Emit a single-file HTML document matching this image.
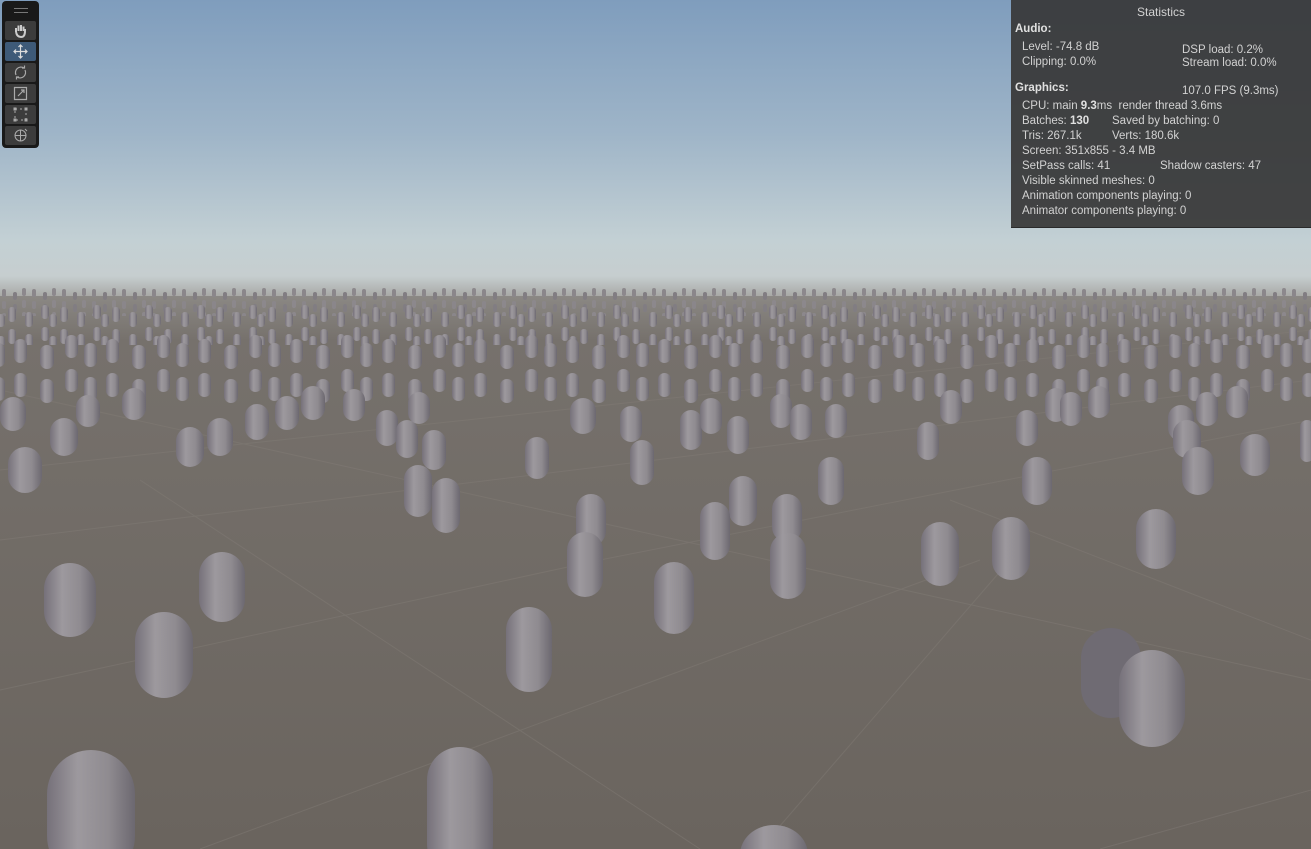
<!DOCTYPE html>
<html><head><meta charset="utf-8"><style>
html,body{margin:0;padding:0;width:1311px;height:849px;overflow:hidden;background:#6e6863}
#scene{position:absolute;left:0;top:0}
#stats{position:absolute;left:1011px;top:0;width:300px;height:227px;background:rgba(56,56,56,0.93);color:#d2d2d2;font-family:"Liberation Sans",sans-serif;font-size:11.5px;border-bottom:1px solid #2a2a2a}
#stats div{position:absolute;white-space:nowrap}
#stats b{font-weight:bold;color:#e0e0e0}
#tools{position:absolute;left:2px;top:1px;width:37px;height:147px;background:#191919;border-radius:4px}
.tb{position:absolute;left:3px;width:31px;height:19px;background:#3c3c3c;border-radius:2px}
.tb svg{position:absolute;left:8px;top:2px}
</style></head><body>
<svg id="scene" width="1311" height="849" xmlns="http://www.w3.org/2000/svg">
<defs>
<linearGradient id="sky" x1="0" y1="0" x2="0" y2="1">
<stop offset="0" stop-color="#7f9dbd"/><stop offset="0.45" stop-color="#9fb5c8"/><stop offset="0.8" stop-color="#c3d0d4"/><stop offset="0.92" stop-color="#c6cecf"/><stop offset="1" stop-color="#a3a29e"/>
</linearGradient>
<linearGradient id="gnd" x1="0" y1="0" x2="0" y2="1">
<stop offset="0" stop-color="#8b8884"/><stop offset="0.08" stop-color="#76716c"/><stop offset="1" stop-color="#6a645e"/>
</linearGradient>
<linearGradient id="cap" x1="0" y1="0" x2="1" y2="0">
<stop offset="0" stop-color="#76717a"/><stop offset="0.35" stop-color="#9d999e"/><stop offset="0.7" stop-color="#8f8b90"/><stop offset="1" stop-color="#6c6870"/>
</linearGradient>
<pattern id="p1" x="0" y="288" width="30" height="12" patternUnits="userSpaceOnUse">
<rect x="2" y="1" width="4" height="8" rx="2" fill="#8a868a"/><rect x="13" y="4" width="4" height="8" rx="2" fill="#817d82"/><rect x="22" y="0" width="4" height="8" rx="2" fill="#8c888c"/>
</pattern>
<pattern id="p2" x="5" y="305" width="52" height="22" patternUnits="userSpaceOnUse">
<rect x="3" y="2" width="8" height="15" rx="4" fill="url(#cap)"/><rect x="20" y="7" width="8" height="15" rx="4" fill="url(#cap)"/><rect x="36" y="0" width="8" height="14" rx="4" fill="url(#cap)"/><rect x="44" y="9" width="8" height="13" rx="4" fill="url(#cap)"/>
</pattern>
<pattern id="p3" x="10" y="335" width="92" height="34" patternUnits="userSpaceOnUse">
<rect x="4" y="4" width="13" height="24" rx="6.5" fill="url(#cap)"/><rect x="30" y="10" width="14" height="24" rx="7" fill="url(#cap)"/><rect x="55" y="0" width="13" height="23" rx="6.5" fill="url(#cap)"/><rect x="74" y="8" width="13" height="24" rx="6.5" fill="url(#cap)"/>
</pattern>
</defs>
<rect width="1311" height="300" fill="url(#sky)"/>
<rect y="296" width="1311" height="553" fill="url(#gnd)"/>
<g stroke="#837d77" stroke-width="1" fill="none" opacity="0.45">
<path d="M0 540 L1311 380"/><path d="M0 690 L600 560 L1311 420"/><path d="M0 470 L700 395 L1311 330"/><path d="M200 849 L980 560"/><path d="M760 849 L1010 560"/><path d="M140 480 L700 849"/><path d="M0 390 L1311 680"/><path d="M950 500 L1311 640"/><path d="M1100 849 L1311 790"/>
</g>
<rect x="0" y="288" width="1311" height="28" fill="url(#p1)"/>
<rect x="0" y="305" width="1311" height="40" fill="url(#p2)"/>
<rect x="0" y="335" width="1311" height="68" fill="url(#p3)"/>
<g fill="url(#cap)">
<rect x="0" y="397" width="26" height="34" rx="13"/><rect x="50" y="418" width="28" height="38" rx="14"/><rect x="76" y="395" width="24" height="32" rx="12"/><rect x="122" y="388" width="24" height="32" rx="12"/><rect x="176" y="427" width="28" height="40" rx="14"/><rect x="207" y="418" width="26" height="38" rx="13"/><rect x="245" y="404" width="24" height="36" rx="12"/><rect x="275" y="396" width="24" height="34" rx="12"/><rect x="301" y="386" width="24" height="34" rx="12"/><rect x="343" y="389" width="22" height="32" rx="11"/><rect x="376" y="410" width="22" height="36" rx="11"/><rect x="396" y="420" width="22" height="38" rx="11"/><rect x="408" y="392" width="22" height="32" rx="11"/>
<rect x="422" y="430" width="24" height="40" rx="12"/><rect x="525" y="437" width="24" height="42" rx="12"/><rect x="570" y="398" width="26" height="36" rx="13"/><rect x="620" y="406" width="22" height="36" rx="11"/><rect x="630" y="440" width="24" height="45" rx="12"/><rect x="680" y="410" width="22" height="40" rx="11"/><rect x="700" y="398" width="22" height="36" rx="11"/><rect x="727" y="416" width="22" height="38" rx="11"/><rect x="770" y="394" width="22" height="34" rx="11"/><rect x="790" y="404" width="22" height="36" rx="11"/><rect x="825" y="404" width="22" height="34" rx="11"/><rect x="818" y="457" width="26" height="48" rx="13"/>
<rect x="917" y="422" width="22" height="38" rx="11"/><rect x="940" y="390" width="22" height="34" rx="11"/><rect x="1016" y="410" width="22" height="36" rx="11"/><rect x="1045" y="388" width="22" height="34" rx="11"/><rect x="1060" y="392" width="22" height="34" rx="11"/><rect x="1088" y="386" width="22" height="32" rx="11"/><rect x="1168" y="405" width="26" height="36" rx="13"/><rect x="1173" y="420" width="28" height="38" rx="14"/><rect x="1196" y="392" width="22" height="34" rx="11"/><rect x="1226" y="386" width="22" height="32" rx="11"/><rect x="1240" y="434" width="30" height="42" rx="15"/><rect x="1300" y="420" width="14" height="42" rx="7"/>
<rect x="8" y="447" width="34" height="46" rx="17"/><rect x="1022" y="457" width="30" height="48" rx="15"/><rect x="1182" y="447" width="32" height="48" rx="16"/>
<rect x="404" y="465" width="28" height="52" rx="14"/><rect x="432" y="478" width="28" height="55" rx="14"/><rect x="576" y="494" width="30" height="52" rx="15"/><rect x="729" y="476" width="28" height="50" rx="14"/><rect x="700" y="502" width="30" height="58" rx="15"/><rect x="772" y="494" width="30" height="48" rx="15"/>
<rect x="567" y="532" width="36" height="65" rx="18"/><rect x="770" y="533" width="36" height="66" rx="18"/><rect x="654" y="562" width="40" height="72" rx="20"/><rect x="921" y="522" width="38" height="64" rx="19"/><rect x="992" y="517" width="38" height="63" rx="19"/><rect x="1136" y="509" width="40" height="60" rx="20"/>
<rect x="44" y="563" width="52" height="74" rx="26"/><rect x="199" y="552" width="46" height="70" rx="23"/><rect x="135" y="612" width="58" height="86" rx="29"/><rect x="506" y="607" width="46" height="85" rx="23"/>
<rect x="1081" y="628" width="60" height="90" rx="30" fill="#6f6b73"/><rect x="1119" y="650" width="66" height="97" rx="33"/>
<rect x="47" y="750" width="88" height="130" rx="44"/><rect x="427" y="747" width="66" height="130" rx="33"/><rect x="740" y="825" width="68" height="60" rx="34"/>
</g>
</svg>
<div id="tools">
<div style="position:absolute;left:12px;top:7px;width:14px;height:1px;background:#777"></div><div style="position:absolute;left:12px;top:11px;width:14px;height:1px;background:#777"></div>
<div class="tb" style="top:20px"><svg width="15" height="15"><path d="M3 9V5M5.5 8V2.5M8 8V2M10.5 8V3.5M3 9Q4 14 8 14Q12 14 12 8V6" stroke="#ccc" stroke-width="2" fill="none"/></svg></div>
<div class="tb" style="top:41px;background:#3e5a78"><svg width="15" height="15"><path d="M7.5 1V14M1 7.5H14M5.5 3L7.5 1L9.5 3M5.5 12L7.5 14L9.5 12M3 5.5L1 7.5L3 9.5M12 5.5L14 7.5L12 9.5" stroke="#ddd" stroke-width="1.2" fill="none"/></svg></div>
<div class="tb" style="top:62px"><svg width="15" height="15"><path d="M11 3A5.5 5.5 0 0 0 3 10M4 12A5.5 5.5 0 0 0 12 5M9 3H11.5V0.5M6 12H3.5V14.5" stroke="#aaa" stroke-width="1.2" fill="none"/></svg></div>
<div class="tb" style="top:83px"><svg width="15" height="15"><path d="M1.5 1.5H13.5V13.5H1.5ZM5 10L11 4M8 4H11V7" stroke="#aaa" stroke-width="1.2" fill="none"/></svg></div>
<div class="tb" style="top:104px"><svg width="15" height="15"><path d="M2 2H13V13H2Z" stroke="#aaa" stroke-width="1" stroke-dasharray="2 3" fill="none"/><rect x="0.5" y="0.5" width="3" height="3" fill="#aaa"/><rect x="11.5" y="0.5" width="3" height="3" fill="#aaa"/><rect x="0.5" y="11.5" width="3" height="3" fill="#aaa"/><rect x="11.5" y="11.5" width="3" height="3" fill="#aaa"/></svg></div>
<div class="tb" style="top:125px"><svg width="15" height="15"><circle cx="7.5" cy="7.5" r="5.5" stroke="#aaa" fill="none"/><path d="M7.5 2V13M2 7.5H13M12 1L14 3" stroke="#aaa" fill="none"/></svg></div>
</div>
<div id="stats">
<div style="left:0;width:300px;text-align:center;top:5px;font-size:12px">Statistics</div>
<div style="left:4px;top:23px"><b>Audio:</b></div>
<div style="left:11px;top:41px">Level: -74.8 dB</div><div style="left:171px;top:44px">DSP load: 0.2%</div>
<div style="left:11px;top:56px">Clipping: 0.0%</div><div style="left:171px;top:57px">Stream load: 0.0%</div>
<div style="left:4px;top:82px"><b>Graphics:</b></div><div style="left:171px;top:85px">107.0 FPS (9.3ms)</div>
<div style="left:11px;top:100px">CPU: main <b>9.3</b>ms&nbsp; render thread 3.6ms</div>
<div style="left:11px;top:115px">Batches: <b>130</b></div><div style="left:101px;top:115px">Saved by batching: 0</div>
<div style="left:11px;top:130px">Tris: 267.1k</div><div style="left:101px;top:130px">Verts: 180.6k</div>
<div style="left:11px;top:145px">Screen: 351x855 - 3.4 MB</div>
<div style="left:11px;top:160px">SetPass calls: 41</div><div style="left:149px;top:160px">Shadow casters: 47</div>
<div style="left:11px;top:175px">Visible skinned meshes: 0</div>
<div style="left:11px;top:190px">Animation components playing: 0</div>
<div style="left:11px;top:205px">Animator components playing: 0</div>
</div>
</body></html>
